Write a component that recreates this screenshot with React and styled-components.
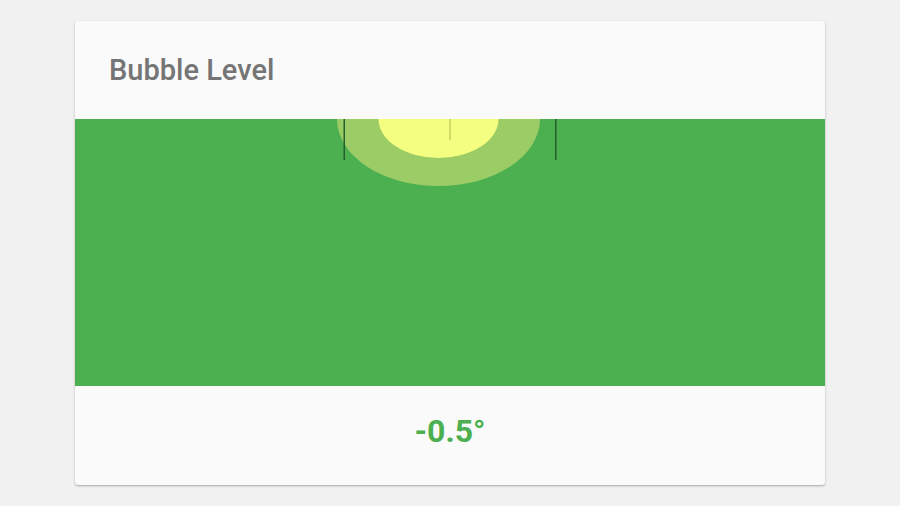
import React from 'react';
import styled, { createGlobalStyle } from 'styled-components';

const GlobalStyle = createGlobalStyle`
    html, body {
        margin: 0;
        padding: 0;
        background: #f1f1f1;
        font-family: Roboto, "Noto Sans", sans-serif;
    }
`

const Page = styled.main`
    padding: 21px 75px;
`

const Card = styled.section`
    display: flex;
    flex-direction: column;
    width: 750px;
    height: 464px;
    background: #fafafa;
    border-radius: 3px;
    overflow: hidden;
    box-shadow: 0 1px 3px rgba(0, 0, 0, 0.2), 0 1px 1px rgba(0, 0, 0, 0.12);
`

const Header = styled.header`
    display: flex;
    align-items: center;
    height: 98px;
    padding-left: 34px;

    h2 {
        margin: 0;
        font-size: 29px;
        font-weight: 500;
        color: #757575;
    }
`

const Vial = styled.div`
    flex: 1;
    background: #4caf50;

    svg {
        display: block;
    }
`

const Reading = styled.footer`
    display: flex;
    align-items: center;
    justify-content: center;
    height: 99px;
    padding-bottom: 9px;
    box-sizing: border-box;
    font-size: 32px;
    font-weight: 700;
    color: #4caf50;
`

export default function App() {
    const angle = -0.5;
    const center = 375 + angle * 23;
    return (
        <>
            <GlobalStyle />
            <Page>
                <Card>
                    <Header>
                        <h2>Bubble Level</h2>
                    </Header>
                    <Vial>
                        <svg width="750" height="267" viewBox="0 0 750 267">
                            <ellipse cx={center} cy="0" rx="101.5" ry="67" fill="#9ccc65" />
                            <ellipse cx={center} cy="0" rx="60" ry="39" fill="#f4ff81" />
                            <rect x="268.5" y="0" width="1.5" height="41" fill="#23602a" />
                            <rect x="480" y="0" width="1.5" height="41" fill="#23602a" />
                            <rect x="374.5" y="0" width="1" height="21" fill="#a9b94c" />
                        </svg>
                    </Vial>
                    <Reading>{angle.toFixed(1)}°</Reading>
                </Card>
            </Page>
        </>
    );
}
